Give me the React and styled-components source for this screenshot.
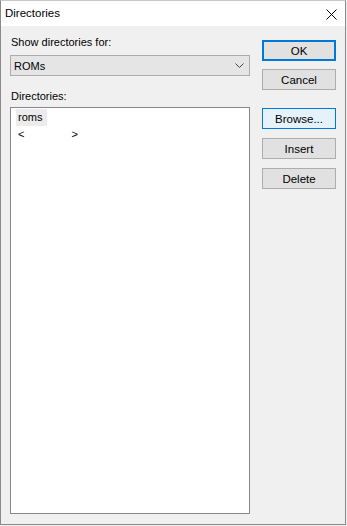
import React from "react";
import styled, { createGlobalStyle } from "styled-components";

const Global = createGlobalStyle`
  html, body { margin: 0; padding: 0; background: #f0f0f0; }
  body { font-family: "Liberation Sans", Arial, sans-serif; font-size: 11px; color: #000; }
  * { box-sizing: border-box; }
`;

const Window = styled.div`
  width: 346px;
  height: 525px;
  border: 1px solid #8a8a8a;
  border-top-color: #c8c8c8;
  background: #f0f0f0;
  display: flex;
  flex-direction: column;
`;

const TitleBar = styled.div`
  height: 25px;
  flex: none;
  background: #fff;
  display: flex;
  align-items: center;
  justify-content: space-between;
  padding: 0 8px 0 4px;
`;

const Title = styled.span`
  font-size: 11.5px;
  line-height: 15px;
`;

const CloseIcon = styled.svg`
  width: 11px;
  height: 11px;
  margin-top: 1px;
`;

const Body = styled.div`
  flex: 1;
  display: flex;
  gap: 12px;
  padding: 9px 9px 10px 9px;
  min-height: 0;
`;

const LeftColumn = styled.div`
  width: 240px;
  display: flex;
  flex-direction: column;
`;

const Label = styled.div`
  line-height: 15px;
  margin-top: ${(p) => p.$top || 0}px;
  margin-bottom: ${(p) => p.$bottom || 0}px;
  padding-left: 1px;
`;

const Combo = styled.div`
  height: 21px;
  flex: none;
  background: #e5e5e5;
  border: 1px solid #acacac;
  display: flex;
  align-items: center;
  justify-content: space-between;
  padding: 0 5px 0 3px;
`;

const ListBox = styled.div`
  flex: 1;
  background: #fff;
  border: 1px solid #828790;
  padding: 1px 0 0 5px;
`;

const Item = styled.div`
  height: 17px;
  line-height: 17px;
  display: ${(p) => (p.$row ? "flex" : "block")};
  justify-content: space-between;
  width: ${(p) => p.$width}px;
  background: ${(p) => (p.$selected ? "#ececec" : "transparent")};
  padding-left: 2px;
`;

const RightColumn = styled.div`
  width: 74px;
  display: flex;
  flex-direction: column;
  padding-top: 5px;
`;

const Button = styled.button`
  height: 21px;
  width: 74px;
  flex: none;
  font-family: inherit;
  font-size: 11.5px;
  color: #000;
  padding: 0;
  margin: ${(p) => p.$top || 0}px 0 0 0;
  background: ${(p) => (p.$hover ? "#e5f1fb" : "#e1e1e1")};
  border: ${(p) => (p.$default ? "2px" : "1px")} solid
    ${(p) => (p.$default || p.$hover ? "#0078d7" : "#adadad")};
`;

export default function App() {
  return (
    <>
      <Global />
      <Window>
        <TitleBar>
          <Title>Directories</Title>
          <CloseIcon viewBox="0 0 11 11">
            <path d="M0.5 0.5 L10.5 10.5 M10.5 0.5 L0.5 10.5" stroke="#000" strokeWidth="1" fill="none" />
          </CloseIcon>
        </TitleBar>
        <Body>
          <LeftColumn>
            <Label $bottom={5}>Show directories for:</Label>
            <Combo>
              <span>ROMs</span>
              <svg width="9" height="5" viewBox="0 0 9 5">
                <path d="M0.5 0.5 L4.5 4.5 L8.5 0.5" stroke="#444" strokeWidth="1" fill="none" />
              </svg>
            </Combo>
            <Label $top={13} $bottom={3}>Directories:</Label>
            <ListBox>
              <Item $selected $width={31}>roms</Item>
              <Item $row $width={62}>
                <span>&lt;</span>
                <span>&gt;</span>
              </Item>
            </ListBox>
          </LeftColumn>
          <RightColumn>
            <Button $default>OK</Button>
            <Button $top={8}>Cancel</Button>
            <Button $top={18} $hover>Browse...</Button>
            <Button $top={9}>Insert</Button>
            <Button $top={9}>Delete</Button>
          </RightColumn>
        </Body>
      </Window>
    </>
  );
}
